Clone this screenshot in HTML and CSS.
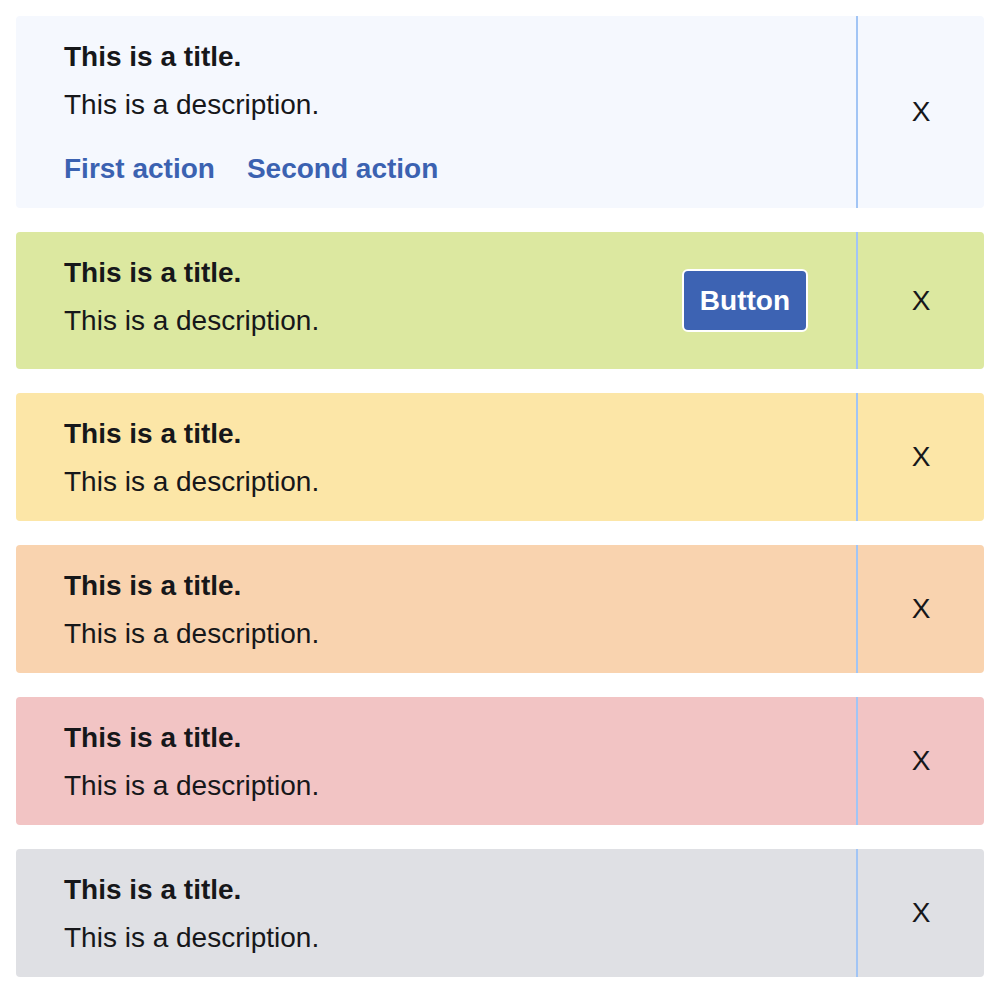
FILE: index.html
```html
<!DOCTYPE html>
<html lang="en">
<head>
<meta charset="utf-8">
<title>Notifications</title>
<link rel="stylesheet" href="styles.css">
</head>
<body>
<div class="stack">
  <div class="note note-info">
    <div class="note-body">
      <div class="note-text">
        <div class="note-title">This is a title.</div>
        <div class="note-desc">This is a description.</div>
        <div class="note-actions">
          <a class="note-link" href="#">First action</a>
          <a class="note-link" href="#">Second action</a>
        </div>
      </div>
    </div>
    <div class="note-close">X</div>
  </div>

  <div class="note note-success">
    <div class="note-body note-body-row">
      <div class="note-text">
        <div class="note-title">This is a title.</div>
        <div class="note-desc">This is a description.</div>
      </div>
      <button class="note-button" type="button">Button</button>
    </div>
    <div class="note-close">X</div>
  </div>

  <div class="note note-warning">
    <div class="note-body">
      <div class="note-text">
        <div class="note-title">This is a title.</div>
        <div class="note-desc">This is a description.</div>
      </div>
    </div>
    <div class="note-close">X</div>
  </div>

  <div class="note note-caution">
    <div class="note-body">
      <div class="note-text">
        <div class="note-title">This is a title.</div>
        <div class="note-desc">This is a description.</div>
      </div>
    </div>
    <div class="note-close">X</div>
  </div>

  <div class="note note-error">
    <div class="note-body">
      <div class="note-text">
        <div class="note-title">This is a title.</div>
        <div class="note-desc">This is a description.</div>
      </div>
    </div>
    <div class="note-close">X</div>
  </div>

  <div class="note note-neutral">
    <div class="note-body">
      <div class="note-text">
        <div class="note-title">This is a title.</div>
        <div class="note-desc">This is a description.</div>
      </div>
    </div>
    <div class="note-close">X</div>
  </div>
</div>
</body>
</html>
```

FILE: styles.css
```css
html, body {
  margin: 0;
  padding: 0;
  background: #ffffff;
}

body {
  padding: 16px;
  font-family: "Liberation Sans", Arial, Helvetica, sans-serif;
  font-size: 28px;
  color: #16171a;
}

.stack {
  display: flex;
  flex-direction: column;
  gap: 24px;
}

.note {
  display: flex;
  border-radius: 4px;
  overflow: hidden;
}

.note-info { background: #f5f8fe; }
.note-success { background: #dce8a0; }
.note-warning { background: #fce6a7; }
.note-caution { background: #f9d3af; }
.note-error { background: #f2c4c4; }
.note-neutral { background: #dfe0e4; }

.note-body {
  flex: 1;
  padding: 25px 48px 23px;
  border-right: 2px solid #a2c5f5;
}

.note-body-row {
  display: flex;
  align-items: flex-start;
  justify-content: space-between;
  gap: 24px;
}

.note-title {
  font-weight: bold;
  line-height: 32px;
}

.note-desc {
  margin-top: 16px;
  line-height: 32px;
}

.note-actions {
  margin-top: 32px;
  display: flex;
  gap: 32px;
  line-height: 32px;
}

.note-link {
  color: #3b62b1;
  font-weight: bold;
  text-decoration: none;
}

.note-button {
  margin: 12px 0 14px;
  padding: 13.5px 16px;
  border: 2px solid #ffffff;
  border-radius: 6px;
  background: #3d63b3;
  color: #ffffff;
  font-family: inherit;
  font-size: 28px;
  font-weight: bold;
  line-height: 32px;
}

.note-close {
  width: 126px;
  display: flex;
  align-items: center;
  justify-content: center;
  font-size: 28px;
  line-height: 32px;
  color: #16171a;
}
```
